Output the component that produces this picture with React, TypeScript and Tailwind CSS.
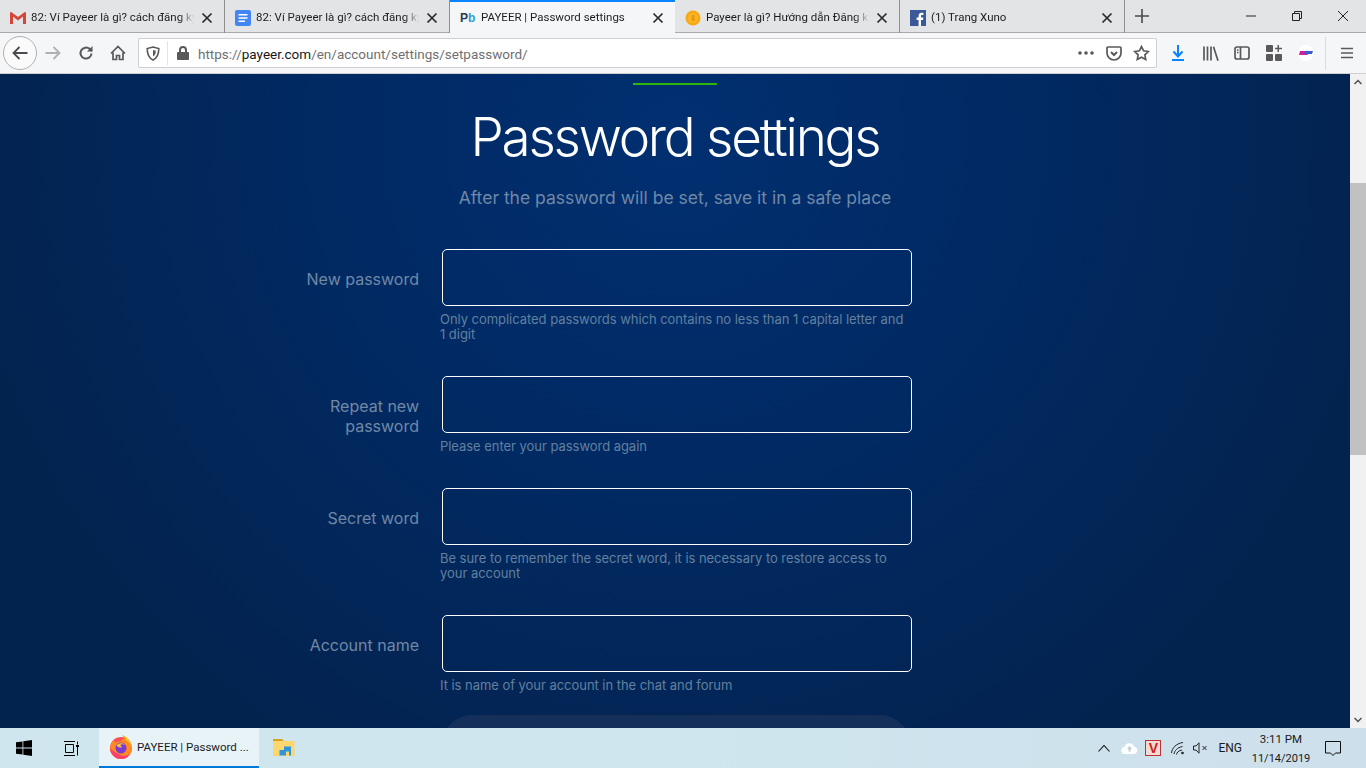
import React from "react";

const UI = "font-['Roboto','Open_Sans',sans-serif]";
const WEB = "font-['Inter','Lato',sans-serif]";

function X({ className = "" }: { className?: string }) {
  return (
    <svg width="12" height="12" viewBox="0 0 12 12" className={className} fill="none" stroke="#2a2a2e" strokeWidth="1.7">
      <path d="M1.5 1.5l9 9M10.5 1.5l-9 9" />
    </svg>
  );
}

function Gmail() {
  return (
    <svg width="16" height="12" viewBox="0 0 16 12">
      <path d="M0 1.2C0 .4.6 0 1.2 0L8 5 14.8 0c.7 0 1.2.4 1.2 1.2V12h-3V4.6L8 8.4 3 4.6V12H0z" fill="#d44638" />
    </svg>
  );
}
function Docs() {
  return (
    <svg width="16" height="16" viewBox="0 0 16 16">
      <rect width="16" height="16" rx="2" fill="#4285f4" />
      <path d="M3.5 4h9v1.6h-9zM3.5 7.2h9v1.6h-9zM3.5 10.4h6.5V12H3.5z" fill="#fff" />
    </svg>
  );
}
function Pb() {
  return (
    <span className="flex w-4 text-[12px] font-bold leading-none font-['Liberation_Sans',sans-serif]">
      <span className="text-[#263b50]">P</span>
      <span className="text-[#2a9fd6]">b</span>
    </span>
  );
}
function Coin() {
  return (
    <svg width="16" height="16" viewBox="0 0 16 16">
      <circle cx="8" cy="8" r="7.5" fill="#f7a90f" />
      <circle cx="8" cy="8" r="5" fill="#f9b52a" />
      <path d="M6.500 5h2.200c1.600 0 1.600 2.600.3 2.900 1.700.2 1.600 3.100-.3 3.100H6.500z" fill="#ea9a0c" />
    </svg>
  );
}
function Fb() {
  return (
    <svg width="16" height="16" viewBox="0 0 16 16">
      <rect width="16" height="16" fill="#3b5998" />
      <path d="M11 16v-6h2l.3-2.400H11V6.100c0-.7.2-1.100 1.200-1.100h1.200V2.900c-.2 0-1-.1-1.800-.1-1.800 0-3 1.100-3 3.100v1.700H6.600V10h2v6z" fill="#fff" />
    </svg>
  );
}

const tabs = [
  { icon: <Gmail />, title: "82: Ví Payeer là gì? cách đăng ký tài khoản" },
  { icon: <Docs />, title: "82: Ví Payeer là gì? cách đăng ký tài khoản" },
  { icon: <Pb />, title: "PAYEER | Password settings", active: true },
  { icon: <Coin />, title: "Payeer là gì? Hướng dẫn Đăng ký tài khoản" },
  { icon: <Fb />, title: "(1) Trang Xuno" },
];

function TabBar() {
  return (
    <div className={`flex h-[33px] bg-[#e3e4e6] border-b border-[#a9a9ab] ${UI}`}>
      {tabs.map((t, i) => (
        <div
          key={i}
          className={`flex h-[33px] w-[225px] shrink-0 items-center pl-[10px] pr-[11px] text-[11.500px] text-[#1d1d20] ${
            t.active ? "bg-[#f5f6f7] border-t-2 border-t-[#0a84ff]" : "h-[32px] border-r border-[#8f8f91] pt-[2px]"
          }`}
        >
          <span className="flex w-4 shrink-0 items-center justify-center">{t.icon}</span>
          <span className="ml-[5px] mt-[1px] min-w-0 flex-1 overflow-hidden whitespace-nowrap [mask-image:linear-gradient(to_right,black_90%,transparent_99%)]">
            {t.title}
          </span>
          <X className="ml-[5px] shrink-0" />
        </div>
      ))}
      <div className="flex h-[32px] w-[33px] items-center justify-center">
        <svg width="14" height="14" viewBox="0 0 14 14" stroke="#4a4a4f" strokeWidth="1.600">
          <path d="M7 0v14M0 7h14" />
        </svg>
      </div>
      <div className="flex-1" />
      <div className="flex h-[32px] items-center">
        <div className="flex w-[46px] justify-center">
          <svg width="10" height="10" viewBox="0 0 10 10" stroke="#222"><path d="M0 5h10" /></svg>
        </div>
        <div className="flex w-[46px] justify-center">
          <svg width="10" height="10" viewBox="0 0 10 10" fill="none" stroke="#222">
            <path d="M.5 2.500h7v7h-7zM2.500 2.500v-2h7v7h-2" />
          </svg>
        </div>
        <div className="flex w-[46px] justify-center">
          <svg width="10" height="10" viewBox="0 0 10 10" stroke="#222"><path d="M0 0l10 10M10 0L0 10" /></svg>
        </div>
      </div>
    </div>
  );
}

const ic = "#59595c";

function Toolbar() {
  return (
    <div className={`flex h-[41px] items-center bg-[#f5f6f7] border-b border-[#cfcfd1] ${UI}`}>
      <div className="ml-[3px] flex h-[34px] w-[34px] items-center justify-center rounded-full border border-[#b1b1b3] bg-[#fafafb]">
        <svg width="16" height="16" viewBox="0 0 16 16" fill="none" stroke="#4a4a4f" strokeWidth="1.800">
          <path d="M15.500 8H1.500M7.500 2L1.500 8l6 6" />
        </svg>
      </div>
      <svg className="ml-[8px]" width="16" height="16" viewBox="0 0 16 16" fill="none" stroke="#b1b1b3" strokeWidth="1.800">
        <path d="M.5 8h14M8.500 2l6 6-6 6" />
      </svg>
      <svg className="ml-[17px]" width="16" height="16" viewBox="0 0 16 16" fill="none" stroke={ic} strokeWidth="2">
        <path d="M13.500 8.500a5.500 5.500 0 1 1-1.700-4.400L14 6" />
        <path d="M14.500 1v5.500H9" fill={ic} stroke="none" />
      </svg>
      <svg className="ml-[16px]" width="16" height="16" viewBox="0 0 16 16" fill="none" stroke={ic} strokeWidth="1.700">
        <path d="M1 8.500L8 1.500l7 7M3 7.500V14.500h3.500v-4h3v4H13V7.500" />
      </svg>
      <div className="ml-[12px] flex h-[30px] w-[1019px] items-center rounded-[2px] border border-[#cfcfd1] bg-white">
        <svg className="ml-[7px]" width="14" height="15" viewBox="0 0 14 15" fill="none" stroke={ic} strokeWidth="1.600">
          <path d="M7 1l5.800 1.500c0 5-1.300 9.500-5.800 11.500C2.500 12 1.200 7.500 1.200 2.500z" />
          <path d="M7 4l2.800.8c0 2.500-.6 4.700-2.800 5.800z" fill={ic} stroke="none" />
        </svg>
        <div className="ml-[7px] h-[24px] w-px bg-[#e3e3e5]" />
        <svg className="ml-[9px]" width="12" height="14" viewBox="0 0 12 14" fill={ic}>
          <path d="M2 6V4a4 4 0 0 1 8 0v2h1a1 1 0 0 1 1 1v6a1 1 0 0 1-1 1H1a1 1 0 0 1-1-1V7a1 1 0 0 1 1-1zm2 0h4V4a2 2 0 0 0-4 0z" />
        </svg>
        <div className="ml-[9px] mt-[2px] text-[13.500px] text-[#6f6f72] whitespace-nowrap">
          https://<span className="text-[#17171a]">payeer.com</span>/en/account/settings/setpassword/
        </div>
        <div className="flex-1" />
        <svg width="16" height="4" viewBox="0 0 16 4" fill={ic}>
          <circle cx="2" cy="2" r="1.800" /><circle cx="8" cy="2" r="1.800" /><circle cx="14" cy="2" r="1.800" />
        </svg>
        <svg className="ml-[12px]" width="16" height="15" viewBox="0 0 16 15" fill="none" stroke={ic} strokeWidth="1.700">
          <path d="M2 1h12a1 1 0 0 1 1 1v5a7 7 0 0 1-14 0V2a1 1 0 0 1 1-1z" />
          <path d="M5 6l3 3 3-3" strokeWidth="2" />
        </svg>
        <svg className="ml-[11px] mr-[6px]" width="17" height="16" viewBox="0 0 17 16" fill="none" stroke={ic} strokeWidth="1.700">
          <path d="M8.500 1.500l2.100 4.300 4.700.7-3.400 3.300.8 4.700-4.200-2.200-4.200 2.200.8-4.700L1.700 6.500l4.700-.7z" />
        </svg>
      </div>
      <svg className="ml-[15px]" width="12" height="16" viewBox="0 0 12 16" fill="none" stroke="#0a84ff" strokeWidth="2">
        <path d="M6 0v11M1.500 6.500L6 11.500l4.500-5M0 15h12" />
      </svg>
      <svg className="ml-[19px]" width="16" height="15" viewBox="0 0 16 15" fill="none" stroke={ic} strokeWidth="1.700">
        <path d="M1 .5v14M4.500.5v14M8 .5v14M10.500.800l4.500 13.900" />
      </svg>
      <svg className="ml-[15px]" width="16" height="14" viewBox="0 0 16 14" fill="none" stroke={ic} strokeWidth="1.700">
        <rect x="1" y="1" width="14" height="12" rx="2" />
        <path d="M6.500 1v12M3 4h1.500M3 6.500h1.500" />
      </svg>
      <svg className="ml-[16px]" width="16" height="16" viewBox="0 0 16 16" fill={ic}>
        <rect x="0" y="0" width="7" height="7" rx="1" />
        <rect x="0" y="9" width="7" height="7" rx="1" />
        <rect x="9" y="9" width="7" height="7" rx="1" />
        <path d="M11.500 0h1.500v2.700H16v1.500h-3v2.800h-1.500V4.200H9V2.700h2.500z" />
      </svg>
      <div className="ml-[16px] flex h-4 w-4 items-center justify-center rounded-full bg-white">
        <svg width="14" height="6" viewBox="0 0 14 6">
          <path d="M1 1h9L8.500 5H0z" fill="#d0209c" />
          <path d="M6 1h8l-1 3H5z" fill="#3d5bd0" />
        </svg>
      </div>
      <div className="ml-[11px] h-[33px] w-px bg-[#dcdcde]" />
      <svg className="ml-[15px]" width="12" height="12" viewBox="0 0 12 12" stroke={ic} strokeWidth="1.700">
        <path d="M0 1.500h12M0 6h12M0 10.500h12" />
      </svg>
    </div>
  );
}

function Field({ label, help }: { label: React.ReactNode; help: React.ReactNode }) {
  return (
    <div className="mb-[33px] flex">
      <div className="w-[119px] shrink-0 pt-[20px] text-right text-[16px] leading-[20px] text-[#7088a6]">
        {label}
      </div>
      <div className="ml-[21px] w-[472px]">
        <div className="ml-[2px] h-[57px] w-[470px] rounded-[5px] border border-white" />
        <div className="mt-[6px] mb-[1px] w-[465px] text-[13px] leading-[15px] text-[#62809f] tracking-[-0.04px]">{help}</div>
      </div>
    </div>
  );
}

function Page() {
  return (
    <div className="flex min-h-0 flex-1">
      <div
        className={`min-w-0 flex-1 overflow-hidden bg-[#02214f] bg-[radial-gradient(ellipse_720px_720px_at_675px_60px,#012f70_0%,#012a64_45%,#03234f_100%)] ${WEB}`}
      >
        <div className="mx-auto mt-[9px] h-[2px] w-[84px] bg-[#2fb50a]" />
        <h1 className="mt-[22px] text-center text-[53px] leading-[60px] font-light tracking-[-2.250px] text-white">
          Password settings
        </h1>
        <p className="mt-[17px] text-center text-[17.500px] leading-[28px] text-[#6f88a8]">
          After the password will be set, save it in a safe place
        </p>
        <div className="ml-[300px] mt-[37px] w-[620px]">
          <Field label="New password" help="Only complicated passwords which contains no less than 1 capital letter and 1 digit" />
          <Field label={<>Repeat new<br />password</>} help="Please enter your password again" />
          <Field label="Secret word" help="Be sure to remember the secret word, it is necessary to restore access to your account" />
          <div className="-mb-[12px]">
            <Field label="Account name" help="It is name of your account in the chat and forum" />
          </div>
          <div className="ml-[142px] h-[60px] w-[468px] rounded-[30px] bg-[#14305a]" />
        </div>
      </div>
      <div className="relative w-[16px] shrink-0 bg-[#f1f1f1]">
        <svg className="absolute left-[4px] top-[5px]" width="8" height="6" viewBox="0 0 8 6" fill="none" stroke="#505050" strokeWidth="1.500">
          <path d="M.5 5L4 1.500 7.500 5" />
        </svg>
        <div className="absolute left-0 top-[109px] h-[272px] w-[16px] bg-[#c1c1c1]" />
        <svg className="absolute bottom-[5px] left-[4px]" width="8" height="6" viewBox="0 0 8 6" fill="none" stroke="#505050" strokeWidth="1.500">
          <path d="M.5 1L4 4.500 7.500 1" />
        </svg>
      </div>
    </div>
  );
}

function Firefox() {
  return (
    <svg width="24" height="24" viewBox="0 0 24 24">
      <circle cx="12" cy="13" r="11" fill="#ff4f5e" />
      <path d="M1.500 11c.5-3 2-5 3.500-6.500 0 1.500.5 2.500 1.500 3C8 6.500 9.500 6.300 11 6.500 16 3 14 1 13.500 0 18 2 23.500 7 23 14c-.5 5-5 10-11 10S1 19 1 13z" fill="#ff8a1f" />
      <path d="M13.500 0c5 2.500 9.500 7.500 9.500 13-1-3.500-3-6-5-7C17 3.500 15 2 13.500 0z" fill="#ffcb2e" />
      <path d="M1 13c0 6 5 11 11 11 4 0 7-2 9-5-3 2-7 2.500-10 1C6 18 3 15 1 13z" fill="#ff3d6e" />
      <circle cx="12" cy="13" r="5.500" fill="#7a3bd4" />
      <path d="M7.500 10.500c2-3 6.500-3 8.500-.5-2-1-4-1-5 .5 1.500.2 2 1 1.500 2-1.500 0-4-.2-5-2z" fill="#ffbf35" />
    </svg>
  );
}

function Taskbar() {
  return (
    <div className={`flex h-[40px] items-center bg-gradient-to-r from-[#cfe6ef] via-[#cfe6ee] to-[#cddfeb] text-[#1a1a1a] ${UI}`}>
      <svg className="ml-[16px]" width="16" height="16" viewBox="0 0 16 16" fill="#000">
        <path d="M0 2.300L6.500 1.400v6.200H0zM7.300 1.300L16 0v7.600H7.300zM0 8.400h6.500v6.200L0 13.700zM7.300 8.400H16V16l-8.700-1.200z" />
      </svg>
      <svg className="ml-[31px]" width="17" height="15" viewBox="0 0 17 15" fill="none" stroke="#000">
        <path d="M1 .5h11M2.500 3.500h8v8h-8zM1 14.500h11M14.500 .5v3M14.500 6v8.500" />
        <rect x="13" y="4" width="3" height="2" fill="#000" stroke="none" />
      </svg>
      <div className="ml-[19px] flex h-[40px] w-[160px] items-center border-b-2 border-[#0078d7] bg-[#e8f3f8] pl-[10px]">
        <Firefox />
        <span className="ml-[4px] mt-[1px] text-[11.500px] whitespace-nowrap">PAYEER | Password ...</span>
      </div>
      <svg className="ml-[14px]" width="22" height="18" viewBox="0 0 22 18">
        <path d="M0 0h9l2 2h-11z" fill="#d9a21b" />
        <path d="M0 2h21.500v15H0z" fill="#fcd66e" />
        <path d="M11 7.500h7v9h-2v-4h-3v4H6.500v-5.500h4.500z" fill="#2b95dd" />
      </svg>
      <div className="flex-1" />
      <svg width="12" height="7" viewBox="0 0 12 7" fill="none" stroke="#111" strokeWidth="1.100"><path d="M.5 6.500l5.500-6 5.500 6" /></svg>
      <svg className="ml-[11px]" width="17" height="11" viewBox="0 0 17 11">
        <path d="M4 11a3.500 3.500 0 0 1-.5-7A5 5 0 0 1 13 3.500a3.800 3.800 0 0 1 0 7.500z" fill="#fff" />
        <path d="M8.500 3L11 6H9.500v2.500h-2V6H6z" fill="#b9cdd8" />
      </svg>
      <div className="ml-[7px] flex h-[16px] w-[16px] items-center justify-center border border-[#b33] bg-[#f5d9d5] text-[14px] font-bold leading-none text-[#cc2218] font-['Liberation_Sans',sans-serif]">
        V
      </div>
      <svg className="ml-[10px]" width="14" height="13" viewBox="0 0 14 13" fill="none" stroke="#222" strokeWidth="1">
        <path d="M.5 11C1 6 5 1.500 12 .5M3 12c.5-3 3-6.500 8.500-7.500M5.500 12.500c.3-1.800 2-4 5.500-4.500" />
        <circle cx="11.500" cy="11" r="1.300" fill="#222" stroke="none" />
      </svg>
      <svg className="ml-[8px]" width="15" height="12" viewBox="0 0 15 12" fill="none" stroke="#222">
        <path d="M.5 4h2.500L6 .8v10.400L3 8H.5z" />
        <path d="M9.500 4l4 4M13.500 4l-4 4" />
      </svg>
      <span className="ml-[10px] text-[12px]">ENG</span>
      <div className="ml-[10px] flex w-[58px] flex-col items-center pt-[1px] text-[11px] leading-[19px]">
        <span className="text-[11.500px]">3:11 PM</span>
        <span className="whitespace-nowrap">11/14/2019</span>
      </div>
      <svg className="ml-[15px] mr-[25px]" width="16" height="15" viewBox="0 0 16 15" fill="none" stroke="#111">
        <path d="M.5.500h15v11.500h-5L8 14.500 5.500 12h-5z" />
      </svg>
    </div>
  );
}

export default function App() {
  return (
    <div className="flex h-[768px] w-[1366px] flex-col overflow-hidden">
      <TabBar />
      <Toolbar />
      <Page />
      <Taskbar />
    </div>
  );
}
